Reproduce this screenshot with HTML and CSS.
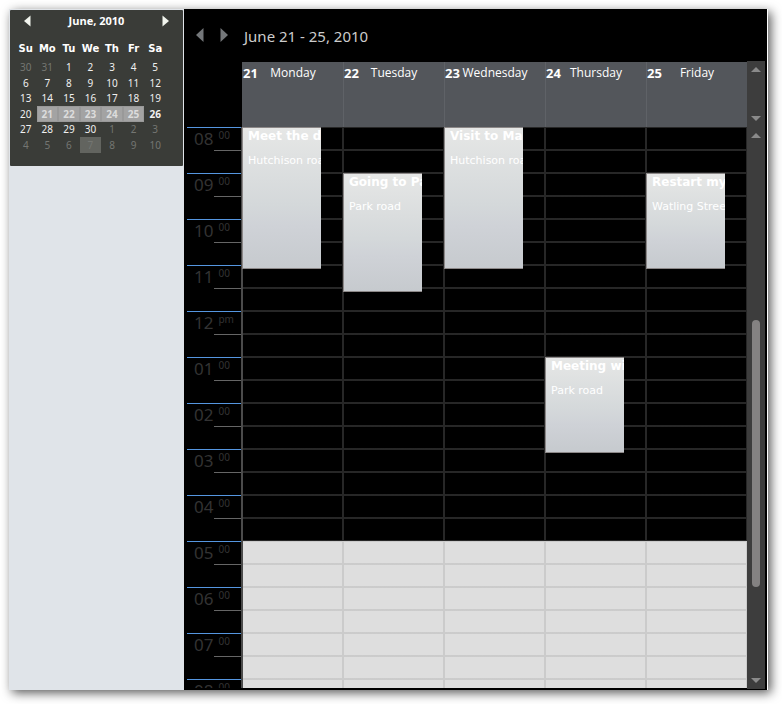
FILE: index.html
```html
<!DOCTYPE html>
<html lang="en">
<head>
<meta charset="utf-8">
<title>Calendar</title>
<link rel="stylesheet" href="styles.css">
</head>
<body>
<div class="app">
  <aside class="sidebar">
    <section class="month">
      <header class="month-head">
        <button type="button" aria-label="Previous month"><svg width="7" height="12"><path d="M6.500 .5V11.500L0 6z" fill="#f2f5ee"/></svg></button>
        <h2>June, 2010</h2>
        <button type="button" aria-label="Next month"><svg width="7" height="12"><path d="M.5 .5V11.500L7 6z" fill="#f2f5ee"/></svg></button>
      </header>
      <table class="month-days">
        <thead><tr><th>Su</th><th>Mo</th><th>Tu</th><th>We</th><th>Th</th><th>Fr</th><th>Sa</th></tr></thead>
        <tbody>
          <tr><td class="out">30</td><td class="out">31</td><td>1</td><td>2</td><td>3</td><td>4</td><td>5</td></tr>
          <tr><td>6</td><td>7</td><td>8</td><td>9</td><td>10</td><td>11</td><td>12</td></tr>
          <tr><td>13</td><td>14</td><td>15</td><td>16</td><td>17</td><td>18</td><td>19</td></tr>
          <tr><td>20</td><td class="sel">21</td><td class="sel">22</td><td class="sel">23</td><td class="sel">24</td><td class="sel">25</td><td class="strong">26</td></tr>
          <tr><td>27</td><td>28</td><td>29</td><td>30</td><td class="out">1</td><td class="out">2</td><td class="out">3</td></tr>
          <tr><td class="out">4</td><td class="out">5</td><td class="out">6</td><td class="out today">7</td><td class="out">8</td><td class="out">9</td><td class="out">10</td></tr>
        </tbody>
      </table>
    </section>
  </aside>

  <main class="schedule">
    <header class="toolbar">
      <button type="button" aria-label="Previous week"><svg width="8" height="14"><path d="M7.500 0V14L0 7z" fill="#74777a"/></svg></button>
      <button type="button" aria-label="Next week"><svg width="8" height="14"><path d="M.5 0V14L8 7z" fill="#74777a"/></svg></button>
      <h1>June 21 - 25, 2010</h1>
    </header>

    <div class="day-row">
      <div class="day-heads">
        <div class="day-head"><b>21</b><span>Monday</span></div>
        <div class="day-head"><b>22</b><span>Tuesday</span></div>
        <div class="day-head"><b>23</b><span>Wednesday</span></div>
        <div class="day-head"><b>24</b><span>Thursday</span></div>
        <div class="day-head"><b>25</b><span>Friday</span></div>
      </div>
      <div class="scrollbar">
        <button type="button" aria-label="Scroll all-day area up"><svg width="10" height="5"><path d="M0 5L5 0L10 5z" fill="#8a8a8a"/></svg></button>
        <div class="track"></div>
        <button type="button" aria-label="Scroll all-day area down"><svg width="10" height="5"><path d="M0 0H10L5 5z" fill="#8a8a8a"/></svg></button>
      </div>
    </div>

    <div class="time-row">
      <div class="time-view">
        <div class="hours">
          <div class="hour">08<small>00</small></div>
          <div class="hour">09<small>00</small></div>
          <div class="hour">10<small>00</small></div>
          <div class="hour">11<small>00</small></div>
          <div class="hour">12<small>pm</small></div>
          <div class="hour">01<small>00</small></div>
          <div class="hour">02<small>00</small></div>
          <div class="hour">03<small>00</small></div>
          <div class="hour">04<small>00</small></div>
          <div class="hour">05<small>00</small></div>
          <div class="hour">06<small>00</small></div>
          <div class="hour">07<small>00</small></div>
          <div class="hour">08<small>00</small></div>
        </div>
        <div class="days">
          <div class="day">
            <article class="event at-8 long"><h3>Meet the doctor</h3><p>Hutchison road</p></article>
          </div>
          <div class="day">
            <article class="event at-9 medium"><h3>Going to Party</h3><p>Park road</p></article>
          </div>
          <div class="day">
            <article class="event at-8 long"><h3>Visit to Mary</h3><p>Hutchison road</p></article>
          </div>
          <div class="day">
            <article class="event at-13 short"><h3>Meeting with</h3><p>Park road</p></article>
          </div>
          <div class="day">
            <article class="event at-9 short"><h3>Restart my car</h3><p>Watling Street</p></article>
          </div>
        </div>
      </div>
      <div class="scrollbar">
        <button type="button" aria-label="Scroll hours up"><svg width="10" height="5"><path d="M0 5L5 0L10 5z" fill="#8a8a8a"/></svg></button>
        <div class="track"><div class="thumb"></div></div>
        <button type="button" aria-label="Scroll hours down"><svg width="10" height="5"><path d="M0 0H10L5 5z" fill="#8a8a8a"/></svg></button>
      </div>
    </div>
  </main>
</div>
</body>
</html>
```
FILE: styles.css
```css
* { box-sizing: border-box; }

body {
  margin: 0;
  padding: 9px 14px 14px 9px;
  background: #fff;
  font-family: "Noto Sans", sans-serif;
}

h1, h2, h3, p { margin: 0; }

button {
  display: flex;
  align-items: center;
  justify-content: center;
  padding: 0;
  border: 0;
  background: none;
}

svg { display: block; }

.app {
  display: flex;
  height: calc(100vh - 23px);
  border-right: 1px solid #fff;
  box-shadow: 3px 3px 10px rgba(0, 0, 0, .65);
}

/* Month picker */
.sidebar {
  flex: 0 0 175px;
  padding: 1px;
  background: #e0e4e9;
}

.month {
  height: 156px;
  border-radius: 1px;
  background: #3a3c38;
  color: #f0f0f0;
}

.month-head {
  display: flex;
  align-items: center;
  justify-content: space-between;
  height: 22px;
  padding: 0 14px;
}

.month-head h2 {
  font-size: 11px;
  line-height: 22px;
  color: #fff;
  font-family: "Open Sans", sans-serif;
}

.month-days {
  width: 151px;
  margin-left: 5px;
  border-collapse: collapse;
  table-layout: fixed;
  font-size: 10px;
  line-height: 15px;
  text-align: center;
}

.month-days th {
  height: 28px;
  padding: 5px 0 0;
  color: #fff;
  font: bold 10px/15px "DejaVu Sans", sans-serif;
}

.month-days td { padding: 0; height: 15px; }
.month-days tbody tr:nth-child(even) td { height: 16px; }
.month-days .out { color: #747672; }
.month-days .strong { font-weight: bold; }

.month-days .sel {
  background: #a3a3a3;
  color: #dcdcdc;
  font-weight: bold;
  box-shadow: inset 0 0 0 1px #999;
}

.month-days .today { background: #62645f; }

/* Schedule */
.schedule {
  flex: 1;
  display: flex;
  flex-direction: column;
  min-width: 0;
  padding: 0 2px 1px 3px;
  background: #000;
}

.toolbar {
  flex: 0 0 52px;
  display: flex;
  align-items: center;
  padding-left: 9px;
}

.toolbar button { margin-right: 16px; }

.toolbar h1 {
  padding-top: 2px;
  color: #ccc;
  font: 15px/20px "Noto Sans", sans-serif;
}

.day-row {
  flex: 0 0 66px;
  display: flex;
  padding-left: 55px;
}

.day-heads {
  flex: 1;
  display: grid;
  grid-template-columns: repeat(5, 1fr);
  margin-top: 1px;
  background: #53565b;
  color: #fff;
}

.day-head {
  display: grid;
  grid-template-columns: 1fr auto 1fr;
  align-items: start;
  padding: 1px 0 0 1px;
  font: 12px/20px "Open Sans", sans-serif;
}

.day-head + .day-head {
  padding-left: 0;
  border-left: 1px solid #5f6267;
}

.day-head b { font-size: 13px; }

.time-row {
  flex: 1;
  display: flex;
  min-height: 0;
}

.time-view {
  flex: 1;
  display: flex;
  align-items: flex-start;
  overflow: hidden;
  margin-bottom: 1px;
}

.hours {
  flex: 0 0 56px;
  border-right: 2px solid #4b4b4b;
}

.hour {
  display: flex;
  height: 46px;
  padding-left: 7px;
  border-top: 1px solid #5596e0;
  background: linear-gradient(#666, #666) right 22px / 27px 1px no-repeat;
  color: #333;
  font-size: 17px;
  line-height: 22px;
}

.hour small {
  margin-left: 5px;
  font-size: 10px;
  line-height: 14px;
}

.days {
  flex: 1;
  display: grid;
  grid-template-columns: repeat(4, 101fr) 100fr;
  background: linear-gradient(#000 414px, #dedede 0);
}

.day {
  display: grid;
  grid-template-rows: repeat(26, 23px);
  min-width: 0;
  border-right: 2px solid rgba(150, 150, 150, .26);
  background: repeating-linear-gradient(
    rgba(150, 150, 150, .26) 0 1px,
    transparent 1px 22px,
    rgba(150, 150, 150, .26) 22px 23px) padding-box;
}

.day:last-child { border-right-width: 1px; }

.event {
  width: 80%;
  margin: 0 0 -4px -1px;
  padding-left: 5px;
  overflow: hidden;
  border: 1px solid #8c8888;
  border-right: 0;
  background: linear-gradient(#e6e7e6, #d4d8da 55%, #cfd2d7 70%, #c6cace);
  color: #fff;
  font-family: "DejaVu Sans", sans-serif;
  white-space: nowrap;
}

.event h3 { font-size: 12px; line-height: 16px; }
.event p { margin-top: 9px; font-size: 11px; line-height: 16px; }

.at-8 { grid-row: 1 / span 6; }
.at-9 { grid-row: 3 / span 4; }
.at-9.medium { grid-row: 3 / span 5; }
.at-13 { grid-row: 11 / span 4; }

/* Scrollbars */
.scrollbar {
  flex: 0 0 18px;
  display: flex;
  flex-direction: column;
  background: #3d3d3d;
}

.scrollbar button { flex: 0 0 17px; }

.track {
  flex: 1;
  display: flex;
  flex-direction: column;
  align-items: center;
}

.track::before { content: ""; flex: 176; }
.track::after { content: ""; flex: 85; }

.thumb {
  flex: 267;
  width: 8px;
  border-radius: 4px;
  background: #848282;
}
```
